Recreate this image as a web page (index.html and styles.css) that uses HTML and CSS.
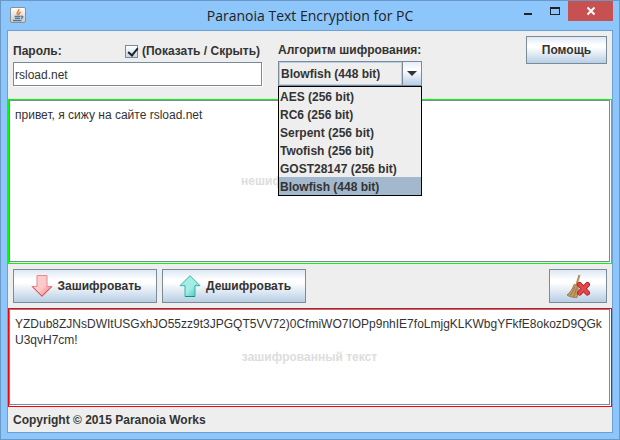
FILE: index.html
```html
<!DOCTYPE html>
<html lang="ru">
<head>
  <meta charset="UTF-8">
  <title>Paranoia Text Encryption for PC</title>
  <link rel="stylesheet" href="styles.css">
</head>
<body>
  <div class="window">
    <header class="titlebar">
      <svg class="app-icon" width="16" height="16" viewBox="0 0 16 16">
        <defs>
          <linearGradient id="tile" x1="0" y1="0" x2="0" y2="1">
            <stop offset="0" stop-color="#fff"/>
            <stop offset="1" stop-color="#c9c9c9"/>
          </linearGradient>
        </defs>
        <rect x=".5" y=".5" width="15" height="15" rx="1.5" fill="url(#tile)" stroke="#8b8f93"/>
        <path d="M8.2 8.2C5 5.600 9.600 4.800 8.700 2M9.400 8.300c-1.400-1.500 0-2.300 1.500-3.200" fill="none" stroke="#e8842c" stroke-width="1.500"/>
        <path d="M4.500 9.500h6M5 11.300h5M3 13.500h8.500M11 9.300c2.500-.6 2.500 1.600 0 2.200" fill="none" stroke="#4f7a99" stroke-width="1.300"/>
      </svg>
      <h1 class="title">Paranoia Text Encryption for PC</h1>
      <div class="window-buttons">
        <button type="button" class="win-btn" aria-label="Свернуть">
          <svg width="10" height="10"><path d="M1 7h8v2H1z" fill="#222"/></svg>
        </button>
        <button type="button" class="win-btn" aria-label="Развернуть">
          <svg width="10" height="10"><path d="M0 1h10v8H0zM1 3v5h8V3z" fill="#222" fill-rule="evenodd"/></svg>
        </button>
        <button type="button" class="win-btn win-close" aria-label="Закрыть">
          <svg width="10" height="10"><path d="M1.500 1.500l7 7M8.500 1.500l-7 7" stroke="#fff" stroke-width="2"/></svg>
        </button>
      </div>
    </header>

    <main class="content">
      <div class="settings">
        <div class="password">
          <div class="password-head">
            <label for="password">Пароль:</label>
            <label class="toggle"><input type="checkbox" class="check" checked>(Показать / Скрыть)</label>
          </div>
          <input type="text" id="password" class="field" value="rsload.net">
        </div>
        <div class="algorithm">
          <label for="algorithm">Алгоритм шифрования:</label>
          <div class="combo">
            <select id="algorithm" class="combo-select">
              <option>AES (256 bit)</option>
              <option>RC6 (256 bit)</option>
              <option>Serpent (256 bit)</option>
              <option>Twofish (256 bit)</option>
              <option>GOST28147 (256 bit)</option>
              <option selected>Blowfish (448 bit)</option>
            </select>
            <span class="combo-arrow"><svg width="10" height="5"><path d="M0 0h10L5 5z" fill="#333"/></svg></span>
            <ul class="combo-list" role="listbox">
              <li role="option">AES (256 bit)</li>
              <li role="option">RC6 (256 bit)</li>
              <li role="option">Serpent (256 bit)</li>
              <li role="option">Twofish (256 bit)</li>
              <li role="option">GOST28147 (256 bit)</li>
              <li role="option" class="selected" aria-selected="true">Blowfish (448 bit)</li>
            </ul>
          </div>
        </div>
        <button type="button" class="btn btn-help">Помощь</button>
      </div>

      <div class="text-box plain">
        <span class="watermark">нешифрованный текст</span>
        <textarea class="text" aria-label="нешифрованный текст" spellcheck="false">привет, я сижу на сайте rsload.net</textarea>
      </div>

      <div class="actions">
        <button type="button" class="btn btn-action">
          <svg width="22" height="22" viewBox="0 0 22 22">
            <defs>
              <linearGradient id="red" x1="0" y1="0" x2="1" y2="1">
                <stop offset="0" stop-color="#fbd0d0"/>
                <stop offset=".55" stop-color="#fcc9c9"/>
                <stop offset="1" stop-color="#f06a6a"/>
              </linearGradient>
            </defs>
            <path d="M6 .5h10v11h5L11 21.500 1 11.500h5z" fill="url(#red)" stroke="#e58a8a"/>
            <path d="M1.500 11.700L11 21.200l9.500-9.500" fill="none" stroke="#dc4c4c"/>
          </svg>
          Зашифровать
        </button>
        <button type="button" class="btn btn-action">
          <svg width="22" height="22" viewBox="0 0 22 22">
            <defs>
              <linearGradient id="green" x1="0" y1="0" x2="1" y2="1">
                <stop offset="0" stop-color="#9df0e6"/>
                <stop offset=".55" stop-color="#a5ede5"/>
                <stop offset="1" stop-color="#2cc0b4"/>
              </linearGradient>
            </defs>
            <path d="M11 .7l10 10h-5v10.800H6V10.700H1z" fill="url(#green)" stroke="#35b3a8"/>
            <path d="M6 21.500h10" stroke="#168f86"/>
          </svg>
          Дешифровать
        </button>
        <button type="button" class="btn btn-clear" aria-label="Очистить">
          <svg width="24" height="24" viewBox="0 0 24 24">
            <path d="M13.500 1L10 12" stroke="#b98b52" stroke-width="2"/>
            <path d="M8 10.500l4 1.500c.5 4 0 7.500-1 11.500-4 0-7.500-.5-10-2.500 3.500-3 5.500-6 7-10.500z" fill="#c49a66" stroke="#8c6537" stroke-width=".7"/>
            <path d="M8.500 13c-.8 3.500-2.500 6-4.500 8.500M10.300 13.500c0 3-1.300 6-2.800 9" fill="none" stroke="#96703f" stroke-width=".9"/>
            <path d="M13.500 10.500l8 8.500M21.500 10.500l-8 8.500" stroke="#b01c20" stroke-width="5" stroke-linecap="round"/>
            <path d="M13.500 10.500l8 8.500M21.500 10.500l-8 8.500" stroke="#e2474b" stroke-width="3.400" stroke-linecap="round"/>
          </svg>
        </button>
      </div>

      <div class="text-box cipher">
        <span class="watermark">зашифрованный текст</span>
        <textarea class="text" aria-label="зашифрованный текст" spellcheck="false">YZDub8ZJNsDWItUSGxhJO55zz9t3JPGQT5VV72)0CfmiWO7IOPp9nhIE7foLmjgKLKWbgYFkfE8okozD9QGkU3qvH7cm!</textarea>
      </div>

      <footer class="footer">Copyright © 2015 Paranoia Works</footer>
    </main>
  </div>
</body>
</html>
```

FILE: styles.css
```css
* {
  box-sizing: border-box;
}
body {
  margin: 0;
  font: bold 12px/16px "Liberation Sans", Arial, sans-serif;
  color: #333;
}
button, input, select, textarea {
  font: inherit;
  color: inherit;
  margin: 0;
}
.window {
  display: flex;
  flex-direction: column;
  height: 100vh;
  padding: 0 6px 6px;
  border: 1px solid #6a98c4;
  background: #8dc6fa;
}

/* title bar */
.titlebar {
  display: grid;
  grid-template-columns: 1fr auto 1fr;
  height: 29px;
}
.app-icon {
  margin: 6px 0 0 3px;
}
.title {
  margin: 0;
  font: 14px/30px "Open Sans", "Noto Sans", sans-serif;
  color: #222;
}
.window-buttons {
  display: flex;
  justify-content: flex-end;
}
.win-btn {
  display: flex;
  align-items: center;
  justify-content: center;
  width: 27px;
  height: 20px;
  padding: 0;
  border: 0;
  background: none;
}
.win-close {
  width: 45px;
  background: #c75050;
}

/* window content */
.content {
  flex: 1;
  display: flex;
  flex-direction: column;
  min-height: 0;
  border: 1px solid #6f9fd0;
  background: #eee;
}
.settings {
  display: flex;
  align-items: flex-start;
  gap: 16px;
  height: 68px;
  padding: 5px;
}
.password {
  width: 249px;
  padding-top: 7px;
}
.password-head {
  display: flex;
  justify-content: space-between;
  padding-right: 2px;
}
.toggle {
  display: flex;
  align-items: center;
  gap: 4px;
}
.check {
  appearance: none;
  width: 13px;
  height: 13px;
  border: 1px solid #7a8a99;
  background: linear-gradient(#fff, #c4d8ea);
}
.check:checked::before {
  content: "";
  display: block;
  width: 4px;
  height: 8px;
  margin: 0 0 0 4px;
  border: solid #222;
  border-width: 0 2px 2px 0;
  transform: rotate(40deg);
}
.field {
  display: block;
  width: 100%;
  height: 24px;
  margin-top: 3px;
  padding: 1px 1px 0;
  border: 1px solid #7a8a99;
  background: #fff;
  box-shadow: 1px 1px #fff;
  font-weight: normal;
}
.algorithm {
  width: 144px;
  padding-top: 6px;
}
.combo {
  position: relative;
  display: flex;
  height: 25px;
  margin-top: 3px;
  border: 1px solid #7a8a99;
}
.combo-select {
  flex: 1;
  min-width: 0;
  appearance: none;
  padding: 0 1px;
  border: 1px solid #b8cfe5;
  background: #eee;
}
.combo-arrow {
  display: flex;
  align-items: center;
  justify-content: center;
  width: 19px;
  border-left: 1px solid #7a8a99;
  background: linear-gradient(#e6eef7, #fff 35%, #b8cfe5);
  pointer-events: none;
}
.combo-list {
  position: absolute;
  z-index: 1;
  top: 24px;
  left: -1px;
  right: -1px;
  margin: 0;
  padding: 0;
  border: 1px solid #000;
  background: #eee;
  list-style: none;
}
.combo-list li {
  padding: 2px 1px 0;
}
.combo-list .selected {
  background: #a3b8cc;
}

/* metal-style buttons */
.btn {
  display: flex;
  align-items: center;
  justify-content: center;
  gap: 5px;
  padding: 0;
  border: 1px solid #7a8a99;
  background: linear-gradient(#dde8f3, #fff 30%, #fff 40%, #b8cfe5);
}
.btn-help {
  width: 81px;
  height: 28px;
  margin-left: auto;
}
.actions {
  display: flex;
  gap: 5px;
  padding: 5px;
}
.btn-action {
  width: 144px;
  height: 34px;
  padding-left: 2px;
}
.btn-clear {
  width: 58px;
  height: 34px;
  margin-left: auto;
}

/* text areas */
.text-box {
  display: grid;
  min-height: 0;
  padding: 0 1px 1px 0;
  border: 1px solid;
  background: #fff;
}
.plain {
  flex: 166;
  border-color: #0f0;
}
.cipher {
  flex: 98;
  border-color: #f00;
}
.watermark, .text {
  grid-area: 1 / 1;
}
.watermark {
  place-self: center;
  color: #ddd;
}
.text {
  width: 100%;
  height: 100%;
  padding: 6px 5px;
  border: 1px solid #7a8a99;
  background: transparent;
  font-weight: normal;
  word-break: break-all;
  resize: none;
  outline: 0;
}
.footer {
  padding: 5px 5px 4px;
}
```
